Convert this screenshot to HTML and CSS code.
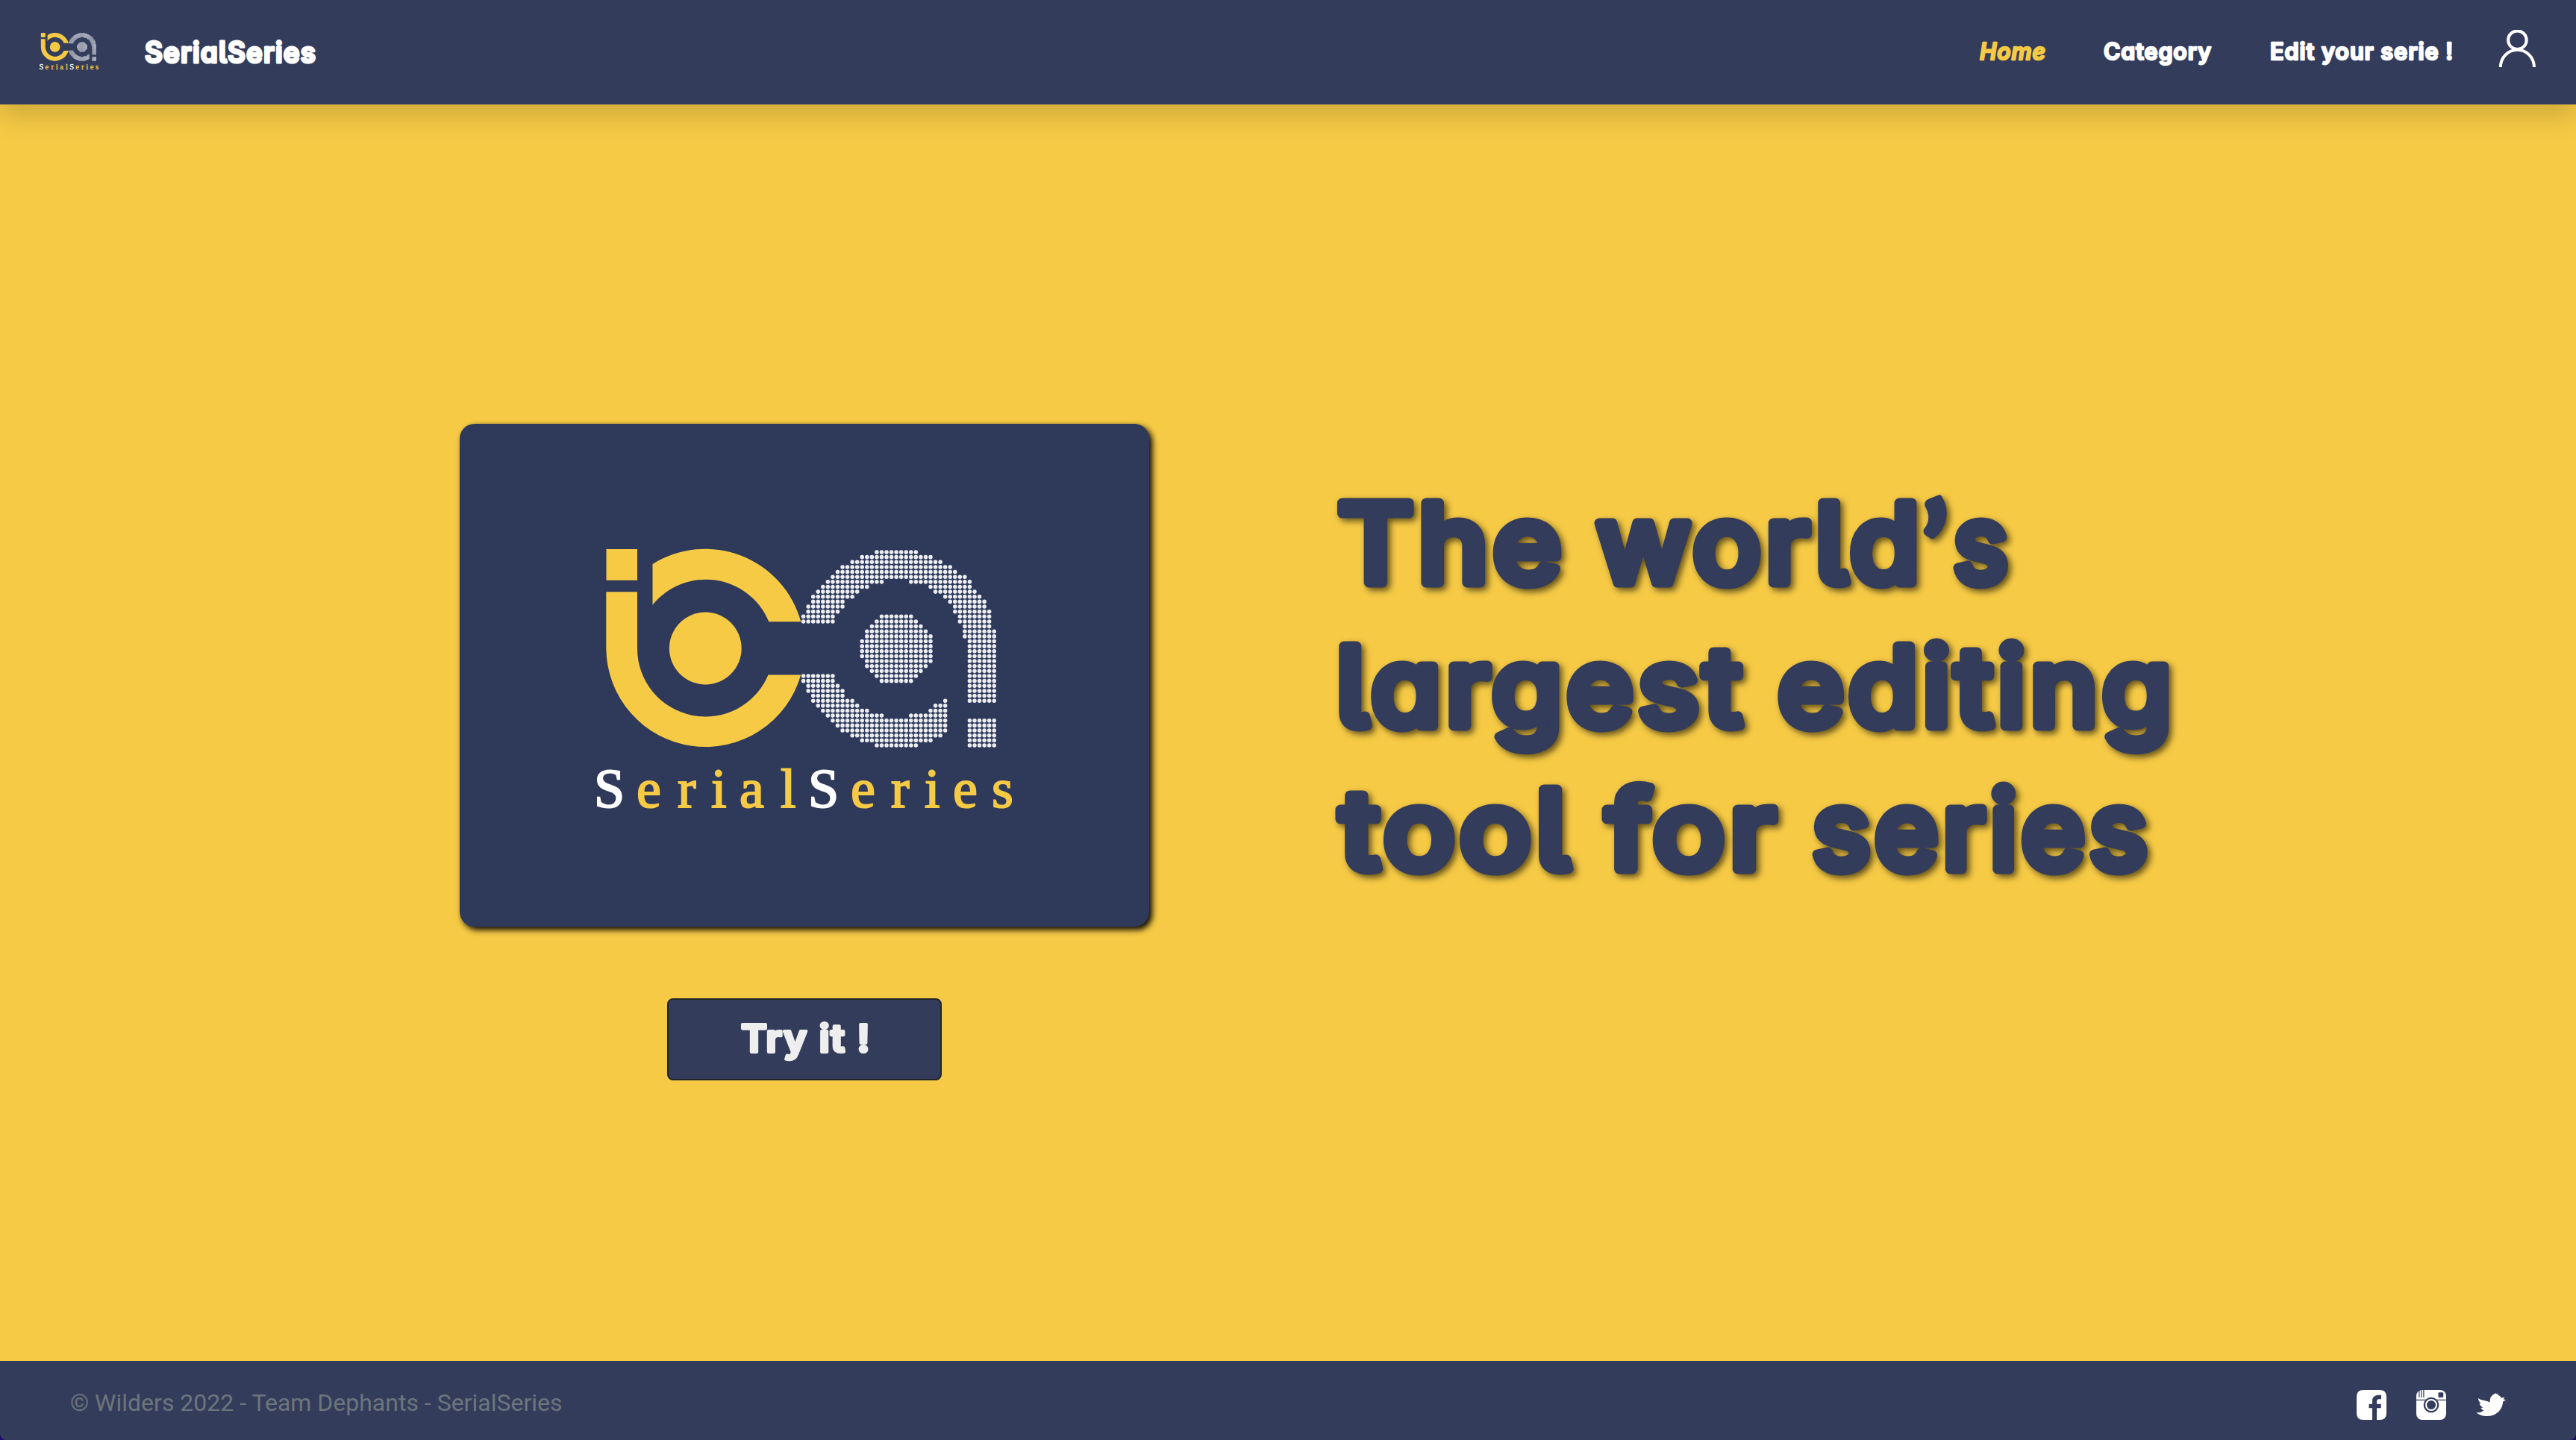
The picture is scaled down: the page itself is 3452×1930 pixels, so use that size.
FILE: index.html
```html
<!DOCTYPE html>
<html lang="en">
<head>
<meta charset="utf-8">
<title>SerialSeries</title>
<link rel="stylesheet" href="styles.css">
</head>
<body>
<svg class="defs" aria-hidden="true">
  <symbol id="logo" viewBox="616 568 924 674">
    <g class="logo-yellow">
      <path d="M812.5 736h41.5v41.7h-41.5z"/>
      <path d="M812.3 793.3H854V869A91.3 91.3 0 0 0 1029.5 904.5H1073.2A133 133 0 0 1 812.3 869Z"/>
      <path d="M874.5 756A133 133 0 0 1 1073.3 833.3H1030.3A91.5 91.5 0 0 0 874.5 810.7Z"/>
      <circle cx="945.3" cy="869" r="48.4"/>
    </g>
    <path class="logo-dots" transform="translate(1076.6 740) scale(6.554 6.64)" d="M15 0h8.01M12 1h14.01M10 2h18.01M8 3h22.01M7 4h24.01M6 5h27.01M5 6h11.01M22 6h12.01M4 7h9.01M26 7h8.01M3 8h8.01M27 8h8.01M2 9h8.01M29 9h7.01M2 10h6.01M30 10h7.01M1 11h7.01M31 11h6.01M1 12h6.01M31 12h7.01M0 13h6.01M16 13h6.01M32 13h6.01M0 14h6.01M15 14h8.01M32 14h6.01M14 15h10.01M33 15h5.01M13 16h12.01M33 16h6.01M13 17h13.01M33 17h6.01M12 18h14.01M34 18h5.01M12 19h14.01M34 19h5.01M12 20h14.01M34 20h5.01M12 21h14.01M34 21h5.01M13 22h13.01M34 22h5.01M13 23h12.01M34 23h5.01M14 24h10.01M34 24h5.01M0 25h6.01M15 25h8.01M34 25h5.01M0 26h6.01M16 26h6.01M34 26h5.01M1 27h6.01M34 27h5.01M1 28h7.01M34 28h5.01M2 29h6.01M34 29h5.01M2 30h8.01M29 30h.01M34 30h5.01M3 31h8.01M27 31h2.01M4 32h9.01M26 32h3.01M5 33h11.01M22 33h7.01M6 34h23.01M34 34h5.01M7 35h22.01M34 35h5.01M8 36h21.01M34 36h5.01M10 37h18.01M34 37h5.01M12 38h14.01M34 38h5.01M15 39h8.01M34 39h5.01"/>
    <text class="logo-name" y="1082" x="796 853 908 953 991 1046 1083 1140 1194 1239 1277 1329"><tspan class="logo-cap">S</tspan>erial<tspan class="logo-cap">S</tspan>eries</text>
  </symbol>
</svg>

<header class="navbar">
  <a class="brand" href="#">
    <svg class="brand-logo" aria-hidden="true"><use href="#logo"/></svg>
    <svg class="display brand-name" width="228" height="60"><text x="-1" y="43" textLength="230" lengthAdjust="spacingAndGlyphs">SerialSeries</text></svg>
  </a>
  <nav class="links">
    <a class="active" href="#"><svg class="display nav-text" width="90" height="50"><text x="-1" y="34" textLength="89" lengthAdjust="spacingAndGlyphs">Home</text></svg></a>
    <a href="#"><svg class="display nav-text" width="146" height="50"><text x="-1" y="34" textLength="145" lengthAdjust="spacingAndGlyphs">Category</text></svg></a>
    <a href="#"><svg class="display nav-text" width="244" height="50"><text x="0" y="34" textLength="246" lengthAdjust="spacingAndGlyphs">Edit your serie !</text></svg></a>
    <a class="account" href="#" aria-label="Account">
      <svg width="50" height="50" viewBox="0 0 50 50"><circle cx="24.400" cy="13.700" r="12.300"/><path d="M1.800 50.500A22.600 23.800 0 0 1 47 50.500"/></svg>
    </a>
  </nav>
</header>

<main class="hero">
  <section class="showcase">
    <div class="card"><svg class="card-logo" role="img" aria-label="SerialSeries logo"><use href="#logo"/></svg></div>
    <button class="try"><svg class="display try-text" width="176" height="80"><text x="3" y="56.500" textLength="174" lengthAdjust="spacingAndGlyphs">Try it !</text></svg></button>
  </section>
  <h1 class="headline">
    <svg class="display headline-text" width="1140" height="580">
      <text x="5" y="143" textLength="306" lengthAdjust="spacingAndGlyphs">The</text>
      <text x="352" y="143" textLength="439" lengthAdjust="spacingAndGlyphs">world</text>
      <text x="788" y="153" class="apostrophe">’</text>
      <text x="830" y="143" textLength="79" lengthAdjust="spacingAndGlyphs">s</text>
      <text x="3" y="335" textLength="550" lengthAdjust="spacingAndGlyphs">largest</text>
      <text x="595" y="335" textLength="534" lengthAdjust="spacingAndGlyphs">editing</text>
      <text x="8" y="527" textLength="314" lengthAdjust="spacingAndGlyphs">tool</text>
      <text x="365" y="527" textLength="233" lengthAdjust="spacingAndGlyphs">for</text>
      <text x="641" y="527" textLength="455" lengthAdjust="spacingAndGlyphs">series</text>
    </svg>
  </h1>
</main>

<footer class="footer">
  <p class="copyright">© Wilders 2022 - Team Dephants - SerialSeries</p>
  <div class="social">
    <svg viewBox="0 0 40 40"><path fill-rule="evenodd" d="M9 0H31Q40 0 40 9V31Q40 40 31 40H27V24.300H32.700V18.700H27V15.500Q27 12.200 30 12.200H33V6.700H29Q21 7 21 15V18.700H16.500V24.300H21V40H9Q0 40 0 31V9Q0 0 9 0Z"/></svg>
    <svg viewBox="0 0 40 40"><rect width="40" height="40" rx="8"/><g class="cut"><path d="M3.300 0h1.200v10H3.300zM6.300 0h1.200v10H6.300zM9.300 0h1.200v10H9.300zM0 12.800h40v1.300H0z"/><rect x="29.500" y="3.300" width="6.700" height="6.700" rx="1"/><circle cx="20" cy="20" r="10.300"/></g><circle cx="20" cy="20" r="8"/><circle class="cut" cx="20" cy="20" r="6"/></svg>
    <svg viewBox="0 0 40 40"><path d="M0 30Q6 31 10.500 27.500Q7.500 26.500 6.500 24L9.500 23.500Q5.500 21.500 4.500 18L7 18.200Q3 15.500 3 11Q6 13.500 11 14Q15.500 14.500 18.500 16.500Q18.500 8 24 5.500L27 4L26.500 5.200L29.500 4.800L28.500 6Q32 7 34 10.500L38.500 9.800L36.500 12.300L40 13.300L36.200 15.500Q35.500 25 28.500 30.500Q23 35 14.500 35Q6 35 0 30Z"/></svg>
  </div>
</footer>
</body>
</html>
```
FILE: styles.css
```css
:root {
  --navy: #343c5b;
  --yellow: #f6ca45;
}

* { box-sizing: border-box; }

body {
  margin: 0;
  height: 1930px;
  display: flex;
  flex-direction: column;
  overflow: hidden;
  background: #1e0a6e;
  font-family: Roboto, sans-serif;
}

a { color: inherit; text-decoration: none; }

.defs { position: absolute; width: 0; height: 0; }
symbol { overflow: visible; }

.logo-yellow { fill: var(--yellow); }
.logo-dots {
  fill: none;
  stroke: #eceef2;
  stroke-width: .84;
  stroke-linecap: round;
  stroke-dasharray: 0 1;
}
.logo-name {
  font: 74px "Liberation Serif", serif;
  fill: var(--yellow);
  stroke: var(--yellow);
  stroke-width: 2;
}
.logo-cap { fill: #fff; stroke: #fff; }

/* Rounded display lettering */
.display {
  display: block;
  overflow: visible;
  font-family: Inter, sans-serif;
  font-feature-settings: "cv11", "cv05";
  font-weight: 600;
  letter-spacing: .03em;
  fill: currentColor;
  stroke: currentColor;
  stroke-linejoin: round;
}

.navbar {
  position: relative;
  flex: none;
  height: 140px;
  display: flex;
  justify-content: space-between;
  background: var(--navy);
  color: #fff;
  box-shadow: 0 16px 32px rgba(0, 0, 0, .15);
}
.brand { display: flex; padding: 20px 0 0 27px; gap: 37px; }
.brand-logo { width: 131px; height: 96px; overflow: visible; }
.brand-name { margin-top: 21px; font-size: 39px; stroke-width: 3.2; }

.links { display: flex; padding: 46px 53px 0 0; }
.links a { margin-right: 76px; }
.links .active { color: var(--yellow); font-style: italic; }
.links a:nth-child(3) { margin-right: 63px; }
.links .account { margin: -6px 0 0; }
.nav-text { font-size: 31px; stroke-width: 2.4; }
.account svg { display: block; fill: none; stroke: #fff; stroke-width: 4; }

.hero {
  flex: 1;
  display: flex;
  align-items: flex-start;
  padding: 428px 0 0 616px;
  gap: 247px;
  background: var(--yellow);
}
.showcase { display: flex; flex-direction: column; align-items: center; gap: 96px; }
.card {
  width: 924px;
  height: 674px;
  border-radius: 20px;
  background: #2f3a5a;
  box-shadow: 4px 4px 8px #000;
}
.card-logo { display: block; width: 924px; height: 674px; overflow: visible; }
.try {
  width: 368px;
  height: 110px;
  padding: 0;
  display: flex;
  align-items: center;
  justify-content: center;
  border: 2px solid #212529;
  border-radius: 8px;
  background: var(--navy);
  color: #eee;
}
.try-text { font-size: 51px; stroke-width: 4.2; }

.headline { margin: 70px 0 0; color: var(--navy); }
.headline-text {
  font-size: 147px;
  font-weight: 500;
  letter-spacing: .035em;
  stroke-width: 13;
  filter: drop-shadow(4px 4px 4px rgba(0, 0, 0, .6));
}
.apostrophe {
  font-family: Lato, sans-serif;
  font-size: 160px;
  font-weight: 900;
  letter-spacing: 0;
  stroke-width: 7;
}

.footer {
  flex: none;
  height: 106px;
  display: flex;
  justify-content: space-between;
  padding: 0 94px;
  border-radius: 0 0 8px 8px;
  background: var(--navy);
}
.copyright { margin: 37px 0 0; font-size: 32px; line-height: 38px; color: #6c757d; }
.social { display: flex; gap: 40px; padding-top: 39px; }
.social svg { width: 40px; height: 40px; fill: #fff; }
.social .cut { fill: var(--navy); }
```
